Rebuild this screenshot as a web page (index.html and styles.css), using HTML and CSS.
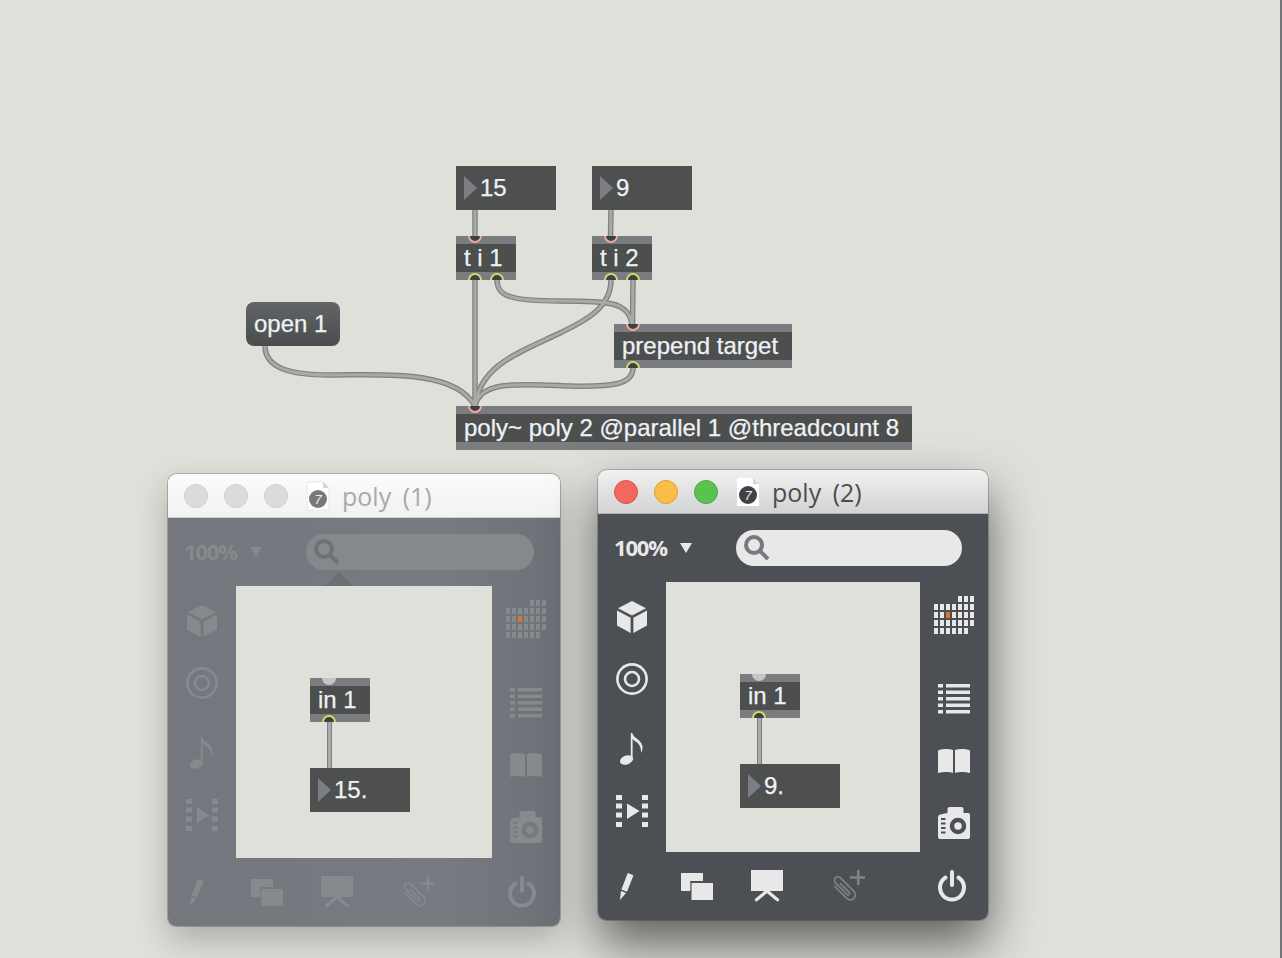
FILE: index.html
```html
<!DOCTYPE html>
<html lang="en">
<head>
<meta charset="utf-8">
<title>poly~ patcher</title>
<link rel="stylesheet" href="styles.css">
</head>
<body>
<svg class="defs" width="0" height="0" aria-hidden="true">
  <symbol id="i-cube" viewBox="0 0 30 32">
    <path d="M15 0 29 7.3 15 14.6 1 7.3Z"/><path d="M0 9.6 13.6 16.8V32L0 24.6Z"/><path d="M30 9.6 16.4 16.8V32L30 24.6Z"/>
  </symbol>
  <symbol id="i-target" viewBox="0 0 32 32">
    <g fill="none" stroke="currentColor" stroke-width="2.6"><circle cx="16" cy="16" r="14.6"/><circle cx="16" cy="16" r="7"/></g>
  </symbol>
  <symbol id="i-note" viewBox="0 0 24 32">
    <ellipse cx="6.500" cy="27" rx="6.800" ry="4.400" transform="rotate(-20 6.500 27)"/>
    <path d="M10.800 26V0H12.300C13 4 17 5 20 8.500 23 12 23.500 16 21 20 21.500 15 19 10.500 16 8.800 14.500 7.800 13.200 6.800 12.600 5.500V27Z"/>
  </symbol>
  <symbol id="i-film" viewBox="0 0 32 32">
    <path d="M0 0h6v5H0zM0 8.500h6v5H0zM0 17.500h6v5H0zM0 27h6v5H0zM26 0h6v5h-6zM26 8.500h6v5h-6zM26 17.500h6v5h-6zM26 27h6v5h-6zM11 8.500 23.500 16 11 24Z"/>
  </symbol>
  <symbol id="i-pencil" viewBox="0 0 14 27">
    <path d="M7.800 0 13.500 2.200 7 18.700 1.400 16.400Z"/><path d="M1 18 6 20 0 27Z"/>
  </symbol>
  <symbol id="i-windows" viewBox="0 0 32 27">
    <path d="M0 0H22V8H9.300V18H0Z"/><path d="M10.500 10H32V27H10.500Z"/>
  </symbol>
  <symbol id="i-screen" viewBox="0 0 32 32">
    <path d="M0 0H32V21H0Z"/>
    <path d="M16 21 5.500 29.800M16 21 26.500 29.800" fill="none" stroke="currentColor" stroke-width="3.200" stroke-linecap="round"/>
  </symbol>
  <symbol id="i-clip" viewBox="0 0 32 32">
    <path d="M24 0h2.500v6.200H32v2.500h-5.500V15H24V8.700H17V6.200h7Z"/>
    <path transform="translate(11 18.500) rotate(-45)" d="M-5-8V9a5 5 0 0 0 10 0V-10a3.500 3.500 0 0 0-7 0V6.500a1.500 1.500 0 0 0 3 0V-6" fill="none" stroke="currentColor" stroke-width="1.700" stroke-linecap="round"/>
  </symbol>
  <symbol id="i-power" viewBox="0 0 28 32">
    <path d="M14 2V15M7.500 7.500A12 12 0 1 0 20.500 7.500" fill="none" stroke="currentColor" stroke-width="4" stroke-linecap="round"/>
  </symbol>
  <symbol id="i-grid" viewBox="0 0 40 38">
    <path d="M24 0h4v6h-4zM30 0h4v6h-4zM36 0h4v6h-4z"/>
    <path d="M0 8h4v6H0zM6 8h4v6H6zM12 8h4v6h-4zM18 8h4v6h-4zM24 8h4v6h-4zM30 8h4v6h-4zM36 8h4v6h-4z"/>
    <path d="M0 16h4v6H0zM6 16h4v6H6zM18 16h4v6h-4zM24 16h4v6h-4zM30 16h4v6h-4zM36 16h4v6h-4z"/>
    <path d="M0 24h4v6H0zM6 24h4v6H6zM12 24h4v6h-4zM18 24h4v6h-4zM24 24h4v6h-4zM30 24h4v6h-4zM36 24h4v6h-4z"/>
    <path d="M0 32h4v6H0zM6 32h4v6H6zM12 32h4v6h-4zM18 32h4v6h-4zM24 32h4v6h-4zM30 32h4v6h-4z"/>
    <rect class="grid-hot" x="12" y="16" width="4" height="6"/>
  </symbol>
  <symbol id="i-list" viewBox="0 0 32 30">
    <path d="M0 0h5v3.500H0zM8 0h24v3.500H8zM0 6.500h5v3.500H0zM8 6.500h24v3.500H8zM0 13h5v3.500H0zM8 13h24v3.500H8zM0 19.500h5v3.500H0zM8 19.500h24v3.500H8zM0 26h5v3.500H0zM8 26h24v3.500H8z"/>
  </symbol>
  <symbol id="i-book" viewBox="0 0 32 24">
    <path d="M0 1.500C5-.3 11-.3 15 1V24C11 22.700 5 22.700 0 24Z"/><path d="M32 1.500C27-.3 21-.3 17 1V24C21 22.700 27 22.700 32 24Z"/>
  </symbol>
  <symbol id="i-camera" viewBox="0 0 32 32">
    <path d="M9.500 6V2Q9.500 0 11.500 0H23.500Q25.500 0 25.500 2V6H30Q32 6 32 8V30Q32 32 30 32H2Q0 32 0 30V10Q0 8 2 7.500Z"/>
    <circle class="cam-hole" cx="20" cy="19" r="6" fill="none" stroke-width="4.500"/>
    <path class="cam-slots" d="M3 11h4.500v2H3zM3 15.500h4.500v2H3zM3 20h4.500v2H3zM3 24.500h4.500v2H3z"/>
  </symbol>
</svg>

<main class="patcher">
  <svg class="cords" width="1282" height="958" aria-hidden="true">
    <g class="cord-edge">
      <path d="M475 210V236"/><path d="M611 210 610.500 236"/>
      <path d="M265 346C265 368 290 375 330 375 380 375 455 369 475 406"/>
      <path d="M497 280C497 296 510 301 560 301 610 301 628 302 632 324"/>
      <path d="M611 280C611 310 580 323 560 333 520 352 480 365 475 406"/>
      <path d="M633 368C633 385 610 387 570 386 520 384 480 380 475 406"/>
      <path d="M475 280V406"/><path d="M633 280 632.500 324"/>
    </g>
    <g class="cord-core">
      <path d="M475 210V236"/><path d="M611 210 610.500 236"/>
      <path d="M265 346C265 368 290 375 330 375 380 375 455 369 475 406"/>
      <path d="M497 280C497 296 510 301 560 301 610 301 628 302 632 324"/>
      <path d="M611 280C611 310 580 323 560 333 520 352 480 365 475 406"/>
      <path d="M633 368C633 385 610 387 570 386 520 384 480 380 475 406"/>
      <path d="M475 280V406"/><path d="M633 280 632.500 324"/>
    </g>
  </svg>

  <div class="node num n-15"><span class="tri"></span><span>15</span></div>
  <div class="node num n-9"><span class="tri"></span><span>9</span></div>
  <div class="node obj n-ti1"><i class="port in p1"></i>t i 1<i class="port out p1"></i><i class="port out p2"></i></div>
  <div class="node obj n-ti2"><i class="port in p1"></i>t i 2<i class="port out p1"></i><i class="port out p2"></i></div>
  <div class="node msg n-open">open 1</div>
  <div class="node obj n-prep"><i class="port in p1"></i>prepend target<i class="port out p1"></i></div>
  <div class="node obj n-poly"><i class="port in p1"></i>poly~ poly 2 @parallel 1 @threadcount 8</div>

  <section class="win win-back">
    <header class="title">
      <span class="light"></span><span class="light"></span><span class="light"></span>
      <svg class="doc" viewBox="0 0 24 30"><path class="doc-page" d="M1 1H17L23 7V29H1Z"/><path class="doc-fold" d="M17 1V7H23Z"/><circle class="doc-disc" cx="12" cy="18" r="9"/><text class="doc-seven" x="12" y="23">7</text></svg>
      <h2>poly (1)</h2>
    </header>
    <div class="frame">
      <div class="toolbar">
        <span class="zoomlabel">100%</span><span class="caret"></span>
        <div class="search"><svg class="lens" viewBox="0 0 26 26"><circle cx="10" cy="10" r="8"/><path d="M15.500 15.500 24 24"/></svg></div>
        <span class="notch"></span>
      </div>
      <div class="side">
        <svg class="ic cube"><use href="#i-cube"/></svg>
        <svg class="ic target"><use href="#i-target"/></svg>
        <svg class="ic note"><use href="#i-note"/></svg>
        <svg class="ic film"><use href="#i-film"/></svg>
      </div>
      <div class="canvas">
        <div class="wire"></div>
        <div class="node obj sub-in"><i class="port ghost p1"></i>in 1<i class="port out p1"></i></div>
        <div class="node num sub-num"><span class="tri"></span><span>15.</span></div>
      </div>
      <div class="side">
        <svg class="ic grid"><use href="#i-grid"/></svg>
        <svg class="ic list"><use href="#i-list"/></svg>
        <svg class="ic book"><use href="#i-book"/></svg>
        <svg class="ic camera"><use href="#i-camera"/></svg>
      </div>
      <div class="bottom">
        <svg class="ic pencil"><use href="#i-pencil"/></svg>
        <svg class="ic windows"><use href="#i-windows"/></svg>
        <svg class="ic screen"><use href="#i-screen"/></svg>
        <svg class="ic clip"><use href="#i-clip"/></svg>
        <svg class="ic power"><use href="#i-power"/></svg>
      </div>
    </div>
  </section>

  <section class="win win-front">
    <header class="title">
      <span class="light red"></span><span class="light amber"></span><span class="light green"></span>
      <svg class="doc" viewBox="0 0 24 30"><path class="doc-page" d="M1 1H17L23 7V29H1Z"/><path class="doc-fold" d="M17 1V7H23Z"/><circle class="doc-disc" cx="12" cy="18" r="9"/><text class="doc-seven" x="12" y="23">7</text></svg>
      <h2>poly (2)</h2>
    </header>
    <div class="frame">
      <div class="toolbar">
        <span class="zoomlabel">100%</span><span class="caret"></span>
        <div class="search"><svg class="lens" viewBox="0 0 26 26"><circle cx="10" cy="10" r="8"/><path d="M15.500 15.500 24 24"/></svg></div>
      </div>
      <div class="side">
        <svg class="ic cube"><use href="#i-cube"/></svg>
        <svg class="ic target"><use href="#i-target"/></svg>
        <svg class="ic note"><use href="#i-note"/></svg>
        <svg class="ic film"><use href="#i-film"/></svg>
      </div>
      <div class="canvas">
        <div class="wire"></div>
        <div class="node obj sub-in"><i class="port ghost p1"></i>in 1<i class="port out p1"></i></div>
        <div class="node num sub-num"><span class="tri"></span><span>9.</span></div>
      </div>
      <div class="side">
        <svg class="ic grid"><use href="#i-grid"/></svg>
        <svg class="ic list"><use href="#i-list"/></svg>
        <svg class="ic book"><use href="#i-book"/></svg>
        <svg class="ic camera"><use href="#i-camera"/></svg>
      </div>
      <div class="bottom">
        <svg class="ic pencil"><use href="#i-pencil"/></svg>
        <svg class="ic windows"><use href="#i-windows"/></svg>
        <svg class="ic screen"><use href="#i-screen"/></svg>
        <svg class="ic clip"><use href="#i-clip"/></svg>
        <svg class="ic power"><use href="#i-power"/></svg>
      </div>
    </div>
  </section>
</main>
</body>
</html>
```

FILE: styles.css
```css
* { box-sizing: border-box; }
html, body { margin: 0; height: 100%; }
body { background: #dfe0da; font-family: "Liberation Sans", Arial, sans-serif; overflow: hidden; }
.defs { position: absolute; }
.patcher {
  position: relative;
  width: 1282px; height: 958px;
  overflow: hidden;
  background: #dfe0da;
  border-right: 2px solid #72767b;
}

/* patch cords */
.cords { position: absolute; left: 0; top: 0; }
.cords path { fill: none; }
.cord-edge path { stroke: #7f807f; stroke-width: 5.5px; }
.cord-core path { stroke: #a9aaa8; stroke-width: 3px; }

/* patcher nodes */
.node {
  position: absolute;
  display: flex;
  align-items: center;
  height: 44px;
  color: #eef2f6;
  font-size: 24px;
  line-height: 28px;
  white-space: nowrap;
  overflow: hidden;
  -webkit-text-stroke: .25px #eef2f6;
}
.num { width: 100px; background: #4d504e; padding-left: 8px; }
.tri {
  width: 0; height: 0; margin-right: 3px; flex: none;
  border-left: 13px solid #7b7d82;
  border-top: 12px solid transparent;
  border-bottom: 12px solid transparent;
}
.obj { padding-left: 8px; background: linear-gradient(#7b7c80 8px, #4c4f4e 8px, #4c4f4e 36px, #7b7c80 36px); }
.msg { padding-left: 8px; border-radius: 8px; background: linear-gradient(#626467, #4a4d4c); }

.n-15 { left: 456px; top: 166px; }
.n-9 { left: 592px; top: 166px; }
.n-ti1 { left: 456px; top: 236px; width: 60px; }
.n-ti2 { left: 592px; top: 236px; width: 60px; }
.n-open { left: 246px; top: 302px; width: 94px; }
.n-prep { left: 614px; top: 324px; width: 178px; }
.n-poly { left: 456px; top: 406px; width: 456px; }

.port {
  position: absolute;
  width: 14px; height: 14px;
  border-radius: 50%;
  border: 2px solid;
  background: #3d4043;
}
.port.in { top: -7px; border-color: #eba99b; }
.port.out { bottom: -7px; border-color: #d6d66a; }
.port.ghost { top: -7px; border: 0; background: #c4c5c5; }
.p1 { left: 12px; }
.p2 { left: 34px; }

/* windows */
.win {
  position: absolute;
  display: flex;
  flex-direction: column;
  border-radius: 9px 9px 8px 8px;
}
.win-back {
  left: 168px; top: 474px; width: 392px; height: 452px;
  --win: #75787e; --ic: #858a8d;
  box-shadow: 0 14px 34px rgba(0,0,0,.24), 0 0 0 1px rgba(90,90,90,.35);
}
.win-front {
  left: 598px; top: 470px; width: 390px; height: 450px;
  --win: #4c4f54; --ic: #e8e8e8;
  box-shadow: 0 24px 50px rgba(0,0,0,.58), 0 0 0 1px rgba(90,90,90,.35);
}
.title {
  display: flex;
  align-items: center;
  flex: none;
  height: 44px;
  padding-left: 16px;
  border-radius: 9px 9px 0 0;
  border-bottom: 1px solid #cfcfcf;
}
.win-back .title { background: linear-gradient(#fbfbfb, #f2f2f2); }
.win-front .title { background: linear-gradient(#f1f1f1, #d3d3d3); border-bottom-color: #b5b5b5; }
.light {
  width: 24px; height: 24px; margin-right: 16px; flex: none;
  border-radius: 50%;
  background: #dcdcdc;
  border: 1px solid #cfcfcf;
}
.light.red { background: #f3675d; border-color: #dc5249; }
.light.amber { background: #fabd47; border-color: #dfa03a; }
.light.green { background: #5ac350; border-color: #48a93f; }
.doc { width: 24px; height: 30px; margin-left: 2px; flex: none; }
.doc-page { fill: #fff; }
.win-back .doc-page { stroke: #e6e6e6; }
.doc-fold { fill: #d6d6d6; }
.doc-disc { fill: #3f4246; }
.win-back .doc-disc { fill: #77797c; }
.doc-seven { fill: #f2f2f2; font-size: 13px; font-style: italic; text-anchor: middle; }
.title h2 {
  margin: 0 0 0 12px;
  font: 400 25px/30px "Open Sans", "Noto Sans", sans-serif;
  word-spacing: 5px;
  color: #4d4d4f;
}
.win-back .title h2 { color: #a9a9ab; }

.frame {
  flex: 1;
  display: grid;
  grid-template-columns: 68px 1fr 68px;
  grid-template-rows: 68px 1fr 68px;
  background: var(--win);
  border-radius: 0 0 8px 8px;
}
.win-back .frame { background: linear-gradient(90deg, #74777e 0, #777a80 70%, #6d7076 100%); }

.toolbar {
  grid-column: 1 / -1;
  position: relative;
  display: flex;
  align-items: center;
  padding: 0 26px 0 16px;
}
.zoomlabel {
  width: 55px;
  margin-top: -2px;
  font: 700 22px/28px "Open Sans", "Noto Sans", sans-serif;
  letter-spacing: -1.2px;
  color: var(--ic);
}
.caret {
  width: 0; height: 0; margin-left: 11px; flex: none;
  border-top: 10px solid var(--ic);
  border-left: 6px solid transparent;
  border-right: 6px solid transparent;
}
.search {
  flex: 1;
  height: 36px;
  margin-left: 44px;
  padding-left: 8px;
  display: flex;
  align-items: center;
  border-radius: 18px;
  background: #e8e8e8;
}
.win-back .search { background: #848a8c; }
.lens { width: 26px; height: 26px; fill: none; stroke: #77797f; stroke-width: 4px; }
.win-back .lens { stroke: #6e7277; }
.notch {
  position: absolute; left: 157px; bottom: 0;
  width: 0; height: 0;
  border-bottom: 14px solid #6d7075;
  border-left: 14px solid transparent;
  border-right: 14px solid transparent;
}

.side { display: flex; flex-direction: column; align-items: center; }
.ic { display: block; flex: none; fill: currentColor; color: var(--ic); }
.cam-hole { stroke: var(--win); }
.cam-slots { fill: var(--win); }
.grid-hot { fill: #d8772c; }

.cube { width: 30px; height: 32px; margin-top: 19px; }
.target { width: 32px; height: 32px; margin-top: 30px; }
.note { width: 24px; height: 32px; margin-top: 38px; }
.film { width: 32px; height: 32px; margin-top: 30px; }
.grid { width: 40px; height: 38px; margin-top: 14px; }
.list { width: 32px; height: 30px; margin-top: 50px; }
.book { width: 32px; height: 24px; margin-top: 35px; }
.camera { width: 32px; height: 32px; margin-top: 34px; }

.canvas { position: relative; background: #dfe0da; overflow: hidden; }
.sub-in { left: 74px; top: 92px; width: 60px; }
.sub-num { left: 74px; top: 182px; }
.wire {
  position: absolute; left: 91px; top: 136px; width: 5px; height: 46px;
  background: linear-gradient(90deg, #7f807f 0 1px, #a9aaa8 1px 4px, #7f807f 4px);
}

.bottom { grid-column: 1 / -1; display: flex; align-items: center; }
.pencil { width: 14px; height: 27px; margin-left: 22px; }
.windows { width: 32px; height: 27px; margin-left: 47px; }
.screen { width: 32px; height: 32px; margin-left: 38px; }
.clip { width: 32px; height: 32px; margin-left: 50px; color: #7f8387; }
.win-back .clip { color: var(--ic); }
.power { width: 28px; height: 32px; margin-left: 73px; }
```
